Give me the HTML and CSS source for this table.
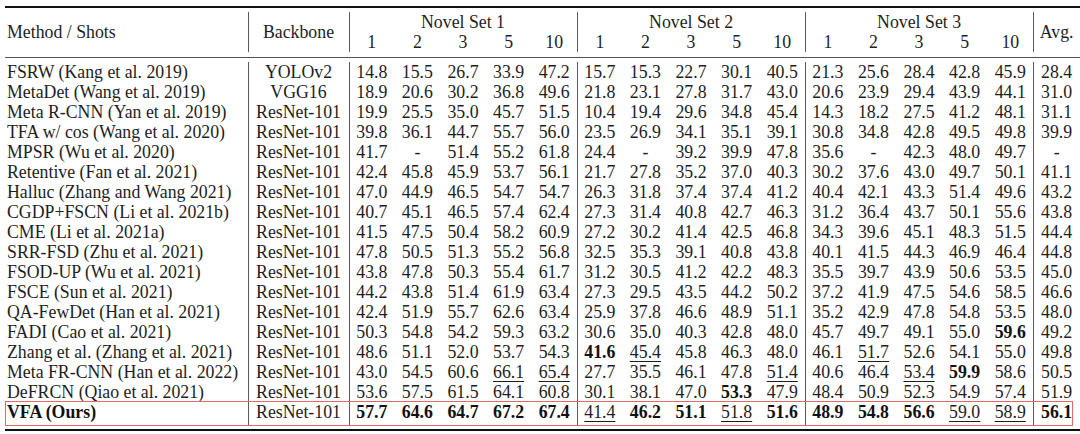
FILE: index.html
```html
<!DOCTYPE html>
<html>
<head>
<meta charset="utf-8">
<link rel="stylesheet" href="styles.css">
</head>
<body>
<div class="wrap">
<table>
<colgroup>
<col class="c-method"><col class="c-bb">
<col class="c-n"><col class="c-n"><col class="c-n"><col class="c-n"><col class="c-n">
<col class="c-n"><col class="c-n"><col class="c-n"><col class="c-n"><col class="c-n">
<col class="c-n"><col class="c-n"><col class="c-n"><col class="c-n"><col class="c-n">
<col class="c-avg">
</colgroup>
<thead>
<tr><th rowspan="2" class="method">Method / Shots</th><th rowspan="2" class="sep">Backbone</th><th colspan="5" class="sep">Novel Set 1</th><th colspan="5" class="sep">Novel Set 2</th><th colspan="5" class="sep">Novel Set 3</th><th rowspan="2" class="sep">Avg.</th></tr>
<tr><th class="sep">1</th><th>2</th><th>3</th><th>5</th><th>10</th><th class="sep">1</th><th>2</th><th>3</th><th>5</th><th>10</th><th class="sep">1</th><th>2</th><th>3</th><th>5</th><th>10</th></tr>
<tr class="midrule"><td colspan="18"></td></tr>
</thead>
<tbody>
<tr><td class="method">FSRW (Kang et al. 2019)</td><td class="sep">YOLOv2</td><td class="sep">14.8</td><td>15.5</td><td>26.7</td><td>33.9</td><td>47.2</td><td class="sep">15.7</td><td>15.3</td><td>22.7</td><td>30.1</td><td>40.5</td><td class="sep">21.3</td><td>25.6</td><td>28.4</td><td>42.8</td><td>45.9</td><td class="sep">28.4</td></tr>
<tr><td class="method">MetaDet (Wang et al. 2019)</td><td class="sep">VGG16</td><td class="sep">18.9</td><td>20.6</td><td>30.2</td><td>36.8</td><td>49.6</td><td class="sep">21.8</td><td>23.1</td><td>27.8</td><td>31.7</td><td>43.0</td><td class="sep">20.6</td><td>23.9</td><td>29.4</td><td>43.9</td><td>44.1</td><td class="sep">31.0</td></tr>
<tr><td class="method">Meta R-CNN (Yan et al. 2019)</td><td class="sep">ResNet-101</td><td class="sep">19.9</td><td>25.5</td><td>35.0</td><td>45.7</td><td>51.5</td><td class="sep">10.4</td><td>19.4</td><td>29.6</td><td>34.8</td><td>45.4</td><td class="sep">14.3</td><td>18.2</td><td>27.5</td><td>41.2</td><td>48.1</td><td class="sep">31.1</td></tr>
<tr><td class="method">TFA w/ cos (Wang et al. 2020)</td><td class="sep">ResNet-101</td><td class="sep">39.8</td><td>36.1</td><td>44.7</td><td>55.7</td><td>56.0</td><td class="sep">23.5</td><td>26.9</td><td>34.1</td><td>35.1</td><td>39.1</td><td class="sep">30.8</td><td>34.8</td><td>42.8</td><td>49.5</td><td>49.8</td><td class="sep">39.9</td></tr>
<tr><td class="method">MPSR (Wu et al. 2020)</td><td class="sep">ResNet-101</td><td class="sep">41.7</td><td>-</td><td>51.4</td><td>55.2</td><td>61.8</td><td class="sep">24.4</td><td>-</td><td>39.2</td><td>39.9</td><td>47.8</td><td class="sep">35.6</td><td>-</td><td>42.3</td><td>48.0</td><td>49.7</td><td class="sep">-</td></tr>
<tr><td class="method">Retentive (Fan et al. 2021)</td><td class="sep">ResNet-101</td><td class="sep">42.4</td><td>45.8</td><td>45.9</td><td>53.7</td><td>56.1</td><td class="sep">21.7</td><td>27.8</td><td>35.2</td><td>37.0</td><td>40.3</td><td class="sep">30.2</td><td>37.6</td><td>43.0</td><td>49.7</td><td>50.1</td><td class="sep">41.1</td></tr>
<tr><td class="method">Halluc (Zhang and Wang 2021)</td><td class="sep">ResNet-101</td><td class="sep">47.0</td><td>44.9</td><td>46.5</td><td>54.7</td><td>54.7</td><td class="sep">26.3</td><td>31.8</td><td>37.4</td><td>37.4</td><td>41.2</td><td class="sep">40.4</td><td>42.1</td><td>43.3</td><td>51.4</td><td>49.6</td><td class="sep">43.2</td></tr>
<tr><td class="method">CGDP+FSCN (Li et al. 2021b)</td><td class="sep">ResNet-101</td><td class="sep">40.7</td><td>45.1</td><td>46.5</td><td>57.4</td><td>62.4</td><td class="sep">27.3</td><td>31.4</td><td>40.8</td><td>42.7</td><td>46.3</td><td class="sep">31.2</td><td>36.4</td><td>43.7</td><td>50.1</td><td>55.6</td><td class="sep">43.8</td></tr>
<tr><td class="method">CME (Li et al. 2021a)</td><td class="sep">ResNet-101</td><td class="sep">41.5</td><td>47.5</td><td>50.4</td><td>58.2</td><td>60.9</td><td class="sep">27.2</td><td>30.2</td><td>41.4</td><td>42.5</td><td>46.8</td><td class="sep">34.3</td><td>39.6</td><td>45.1</td><td>48.3</td><td>51.5</td><td class="sep">44.4</td></tr>
<tr><td class="method">SRR-FSD (Zhu et al. 2021)</td><td class="sep">ResNet-101</td><td class="sep">47.8</td><td>50.5</td><td>51.3</td><td>55.2</td><td>56.8</td><td class="sep">32.5</td><td>35.3</td><td>39.1</td><td>40.8</td><td>43.8</td><td class="sep">40.1</td><td>41.5</td><td>44.3</td><td>46.9</td><td>46.4</td><td class="sep">44.8</td></tr>
<tr><td class="method">FSOD-UP (Wu et al. 2021)</td><td class="sep">ResNet-101</td><td class="sep">43.8</td><td>47.8</td><td>50.3</td><td>55.4</td><td>61.7</td><td class="sep">31.2</td><td>30.5</td><td>41.2</td><td>42.2</td><td>48.3</td><td class="sep">35.5</td><td>39.7</td><td>43.9</td><td>50.6</td><td>53.5</td><td class="sep">45.0</td></tr>
<tr><td class="method">FSCE (Sun et al. 2021)</td><td class="sep">ResNet-101</td><td class="sep">44.2</td><td>43.8</td><td>51.4</td><td>61.9</td><td>63.4</td><td class="sep">27.3</td><td>29.5</td><td>43.5</td><td>44.2</td><td>50.2</td><td class="sep">37.2</td><td>41.9</td><td>47.5</td><td>54.6</td><td>58.5</td><td class="sep">46.6</td></tr>
<tr><td class="method">QA-FewDet (Han et al. 2021)</td><td class="sep">ResNet-101</td><td class="sep">42.4</td><td>51.9</td><td>55.7</td><td>62.6</td><td>63.4</td><td class="sep">25.9</td><td>37.8</td><td>46.6</td><td>48.9</td><td>51.1</td><td class="sep">35.2</td><td>42.9</td><td>47.8</td><td>54.8</td><td>53.5</td><td class="sep">48.0</td></tr>
<tr><td class="method">FADI (Cao et al. 2021)</td><td class="sep">ResNet-101</td><td class="sep">50.3</td><td>54.8</td><td>54.2</td><td>59.3</td><td>63.2</td><td class="sep">30.6</td><td>35.0</td><td>40.3</td><td>42.8</td><td>48.0</td><td class="sep">45.7</td><td>49.7</td><td>49.1</td><td>55.0</td><td><b>59.6</b></td><td class="sep">49.2</td></tr>
<tr><td class="method">Zhang et al. (Zhang et al. 2021)</td><td class="sep">ResNet-101</td><td class="sep">48.6</td><td>51.1</td><td>52.0</td><td>53.7</td><td>54.3</td><td class="sep"><b>41.6</b></td><td><u>45.4</u></td><td>45.8</td><td>46.3</td><td>48.0</td><td class="sep">46.1</td><td><u>51.7</u></td><td>52.6</td><td>54.1</td><td>55.0</td><td class="sep">49.8</td></tr>
<tr><td class="method">Meta FR-CNN (Han et al. 2022)</td><td class="sep">ResNet-101</td><td class="sep">43.0</td><td>54.5</td><td>60.6</td><td><u>66.1</u></td><td><u>65.4</u></td><td class="sep">27.7</td><td>35.5</td><td>46.1</td><td>47.8</td><td><u>51.4</u></td><td class="sep">40.6</td><td>46.4</td><td><u>53.4</u></td><td><b>59.9</b></td><td>58.6</td><td class="sep">50.5</td></tr>
<tr><td class="method">DeFRCN (Qiao et al. 2021)</td><td class="sep">ResNet-101</td><td class="sep">53.6</td><td>57.5</td><td>61.5</td><td>64.1</td><td>60.8</td><td class="sep">30.1</td><td>38.1</td><td>47.0</td><td><b>53.3</b></td><td>47.9</td><td class="sep">48.4</td><td>50.9</td><td>52.3</td><td>54.9</td><td>57.4</td><td class="sep">51.9</td></tr>
<tr class="last"><td class="method"><b>VFA (Ours)</b></td><td class="sep">ResNet-101</td><td class="sep"><b>57.7</b></td><td><b>64.6</b></td><td><b>64.7</b></td><td><b>67.2</b></td><td><b>67.4</b></td><td class="sep"><u>41.4</u></td><td><b>46.2</b></td><td><b>51.1</b></td><td><u>51.8</u></td><td><b>51.6</b></td><td class="sep"><b>48.9</b></td><td><b>54.8</b></td><td><b>56.6</b></td><td><u>59.0</u></td><td><u>58.9</u></td><td class="sep"><b>56.1</b></td></tr>
</tbody>
</table>
<div class="highlight"></div>
</div>
</body>
</html>
```
FILE: styles.css
```css
* { box-sizing: border-box; }
html, body { margin: 0; padding: 0; background: #fff; }
body {
  font-family: "Liberation Serif", "Times New Roman", serif;
  font-size: 17.8px;
  color: #1e1e1e;
}
.wrap {
  position: relative;
  margin: 6px 0 0 5px;
  width: 1075px;
  border-top: 2px solid #111;
  border-bottom: 2px solid #111;
  padding: 4px 0 3px;
}
table {
  border-collapse: separate;
  border-spacing: 0;
  table-layout: fixed;
  width: 1075px;
}
.c-method { width: 243px; }
.c-bb { width: 101px; }
.c-n { width: 45.6px; }
.c-avg { width: 47px; }
th, td {
  padding: 0;
  height: 20px;
  line-height: 20px;
  text-align: center;
  font-weight: normal;
  white-space: nowrap;
  vertical-align: middle;
}
.method { text-align: left; padding-left: 2px; }
.sep { box-shadow: inset 1px 0 #5a5a5a; }
.midrule td {
  height: 10px;
  background: linear-gradient(#555, #555) 0 5px / 100% 1px no-repeat;
}
b { font-weight: bold; color: #111; }
u {
  text-decoration: underline;
  text-decoration-thickness: 1px;
  text-underline-offset: 3px;
}
.last td { height: 24px; vertical-align: top; }
.highlight {
  position: absolute;
  left: 0;
  top: 393px;
  width: 1068px;
  height: 25px;
  border: 1px solid #e26a6a;
  pointer-events: none;
}
```
